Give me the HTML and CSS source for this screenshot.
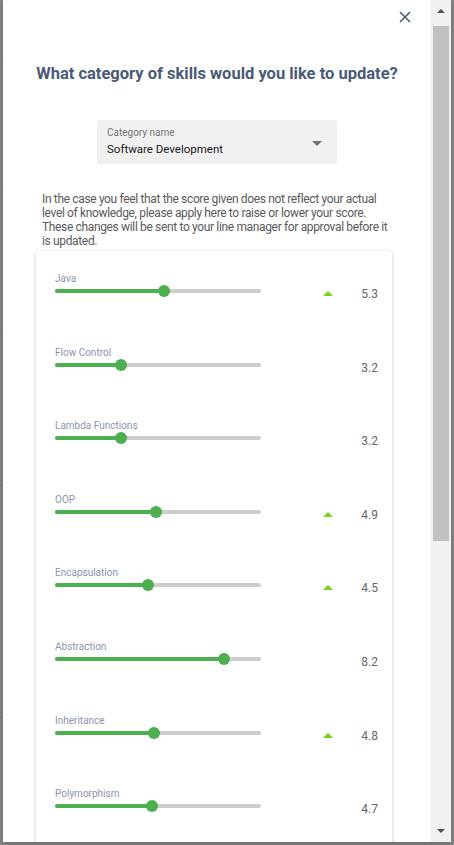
FILE: index.html
```html
<!DOCTYPE html>
<html>
<head>
<meta charset="utf-8">
<link rel="stylesheet" href="styles.css">
</head>
<body>
<div class="backdrop">
  <div class="dialog">
    <div class="content">
      <div class="close-row">
        <svg class="close" width="12" height="12" viewBox="0 0 12 12"><path d="M1 1L11 11M11 1L1 11" stroke="#4a5a78" stroke-width="1.6" fill="none"/></svg>
      </div>
      <h1 class="title">What category of skills would you like to update?</h1>
      <div class="select">
        <div class="select-text">
          <div class="select-label">Category name</div>
          <div class="select-value">Software Development</div>
        </div>
        <span class="select-arrow"></span>
      </div>
      <p class="intro">In the case you feel that the score given does not reflect your actual level of knowledge, please apply here to raise or lower your score. These changes will be sent to your line manager for approval before it is updated.</p>
      <div class="card">
        <div class="row"><div class="skill"><div class="label">Java</div><div class="slider"><div class="track"><div class="fill" style="width:53%"></div></div><span class="thumb" style="left:53%"></span></div></div><span class="up"></span><span class="value">5.3</span></div>
        <div class="row"><div class="skill"><div class="label">Flow Control</div><div class="slider"><div class="track"><div class="fill" style="width:32%"></div></div><span class="thumb" style="left:32%"></span></div></div><span class="up hidden"></span><span class="value">3.2</span></div>
        <div class="row"><div class="skill"><div class="label">Lambda Functions</div><div class="slider"><div class="track"><div class="fill" style="width:32%"></div></div><span class="thumb" style="left:32%"></span></div></div><span class="up hidden"></span><span class="value">3.2</span></div>
        <div class="row"><div class="skill"><div class="label">OOP</div><div class="slider"><div class="track"><div class="fill" style="width:49%"></div></div><span class="thumb" style="left:49%"></span></div></div><span class="up"></span><span class="value">4.9</span></div>
        <div class="row"><div class="skill"><div class="label">Encapsulation</div><div class="slider"><div class="track"><div class="fill" style="width:45%"></div></div><span class="thumb" style="left:45%"></span></div></div><span class="up"></span><span class="value">4.5</span></div>
        <div class="row"><div class="skill"><div class="label">Abstraction</div><div class="slider"><div class="track"><div class="fill" style="width:82%"></div></div><span class="thumb" style="left:82%"></span></div></div><span class="up hidden"></span><span class="value">8.2</span></div>
        <div class="row"><div class="skill"><div class="label">Inheritance</div><div class="slider"><div class="track"><div class="fill" style="width:48%"></div></div><span class="thumb" style="left:48%"></span></div></div><span class="up"></span><span class="value">4.8</span></div>
        <div class="row"><div class="skill"><div class="label">Polymorphism</div><div class="slider"><div class="track"><div class="fill" style="width:47%"></div></div><span class="thumb" style="left:47%"></span></div></div><span class="up hidden"></span><span class="value">4.7</span></div>
      </div>
    </div>
    <div class="scrollbar">
      <div class="sb-btn"><span class="sb-up"></span></div>
      <div class="sb-thumb"></div>
      <div class="sb-rest"></div>
      <div class="sb-btn"><span class="sb-down"></span></div>
    </div>
  </div>
</div>
</body>
</html>
```

FILE: styles.css
```css
html, body {
  margin: 0;
  padding: 0;
  height: 845px;
  overflow: hidden;
}
body {
  background: #898989;
  font-family: Roboto, "Liberation Sans", sans-serif;
}
.backdrop {
  padding-left: 3px;
  height: 845px;
  background:
    linear-gradient(#7d7d7d, #7d7d7d) 0 62px / 3px 1px no-repeat,
    linear-gradient(#7d7d7d, #7d7d7d) 0 190px / 3px 1px no-repeat,
    linear-gradient(#7d7d7d, #7d7d7d) 0 332px / 3px 1px no-repeat,
    linear-gradient(#7d7d7d, #7d7d7d) 0 485px / 3px 1px no-repeat,
    linear-gradient(#7d7d7d, #7d7d7d) 0 717px / 3px 1px no-repeat,
    #898989;
}
.dialog {
  width: 448px;
  height: 842px;
  background: #fff;
  display: flex;
  box-shadow: 0 2px 6px rgba(0,0,0,0.25);
  overflow: hidden;
}
.content {
  width: 428px;
  flex: none;
  padding-top: 11px;
  overflow: hidden;
}
.close-row {
  display: flex;
  justify-content: flex-end;
  padding-right: 20px;
  height: 12px;
}
.close { display: block; }
.title {
  margin: 41px 0 0;
  font-size: 16.5px;
  line-height: 20px;
  font-weight: 700;
  color: #4a5a78;
  text-align: center;
}
.select {
  width: 240px;
  height: 44px;
  margin: 36px auto 0;
  background: #f0f0f0;
  border-radius: 4px 4px 0 0;
  box-sizing: border-box;
  padding: 6px 15px 0 10px;
  display: flex;
  align-items: flex-start;
}
.select-text { flex: 1; }
.select-label {
  font-size: 10px;
  line-height: 13px;
  color: #777;
}
.select-value {
  margin-top: 2px;
  font-size: 11.5px;
  line-height: 17px;
  color: #212121;
}
.select-arrow {
  width: 0;
  height: 0;
  border-left: 5px solid transparent;
  border-right: 5px solid transparent;
  border-top: 5px solid #757575;
  margin-top: 15px;
}
.intro {
  margin: 28px 0 0 39px;
  width: 352px;
  font-size: 12px;
  letter-spacing: -0.35px;
  line-height: 14px;
  color: #5a5a5a;
}
.card {
  margin: 3px 0 0 33px;
  width: 356px;
  padding-top: 22px;
  border-radius: 3px;
  box-shadow: 0 1px 4px rgba(0,0,0,0.22);
  background: #fff;
  height: 700px;
}
.row {
  display: flex;
  align-items: flex-start;
  height: 73.6px;
  padding: 0 14px 0 19px;
}
.skill { width: 206px; }
.label {
  font-size: 10px;
  line-height: 12px;
  color: #8a95b2;
}
.slider {
  position: relative;
  height: 12px;
  margin-top: 0;
}
.track {
  position: relative;
  top: 4px;
  height: 4px;
  background: #cdcdcd;
  border-radius: 2px;
  overflow: hidden;
}
.fill {
  height: 4px;
  background: #4caf50;
}
.thumb {
  position: absolute;
  top: 0;
  width: 12px;
  height: 12px;
  margin-left: -6px;
  border-radius: 50%;
  background: #4caf50;
}
.up {
  margin: 18px 0 0 auto;
  width: 0;
  height: 0;
  border-left: 5px solid transparent;
  border-right: 5px solid transparent;
  border-bottom: 5px solid #76d21c;
}
.up.hidden { visibility: hidden; }
.value {
  width: 45px;
  text-align: right;
  margin-top: 14px;
  font-size: 12px;
  line-height: 14px;
  color: #666;
}
.scrollbar {
  width: 20px;
  flex: none;
  background: #f1f1f1;
  display: flex;
  flex-direction: column;
}
.sb-btn {
  height: 22px;
  display: flex;
  align-items: center;
  justify-content: center;
  padding-right: 1px;
}
.sb-up {
  width: 0; height: 0;
  border-left: 4px solid transparent;
  border-right: 4px solid transparent;
  border-bottom: 4px solid #505050;
}
.sb-down {
  width: 0; height: 0;
  border-left: 4px solid transparent;
  border-right: 4px solid transparent;
  border-top: 4px solid #505050;
}
.sb-thumb {
  margin: 4px 2px 0;
  height: 515px;
  background: #c1c1c1;
}
.sb-rest { flex: 1; }
```
